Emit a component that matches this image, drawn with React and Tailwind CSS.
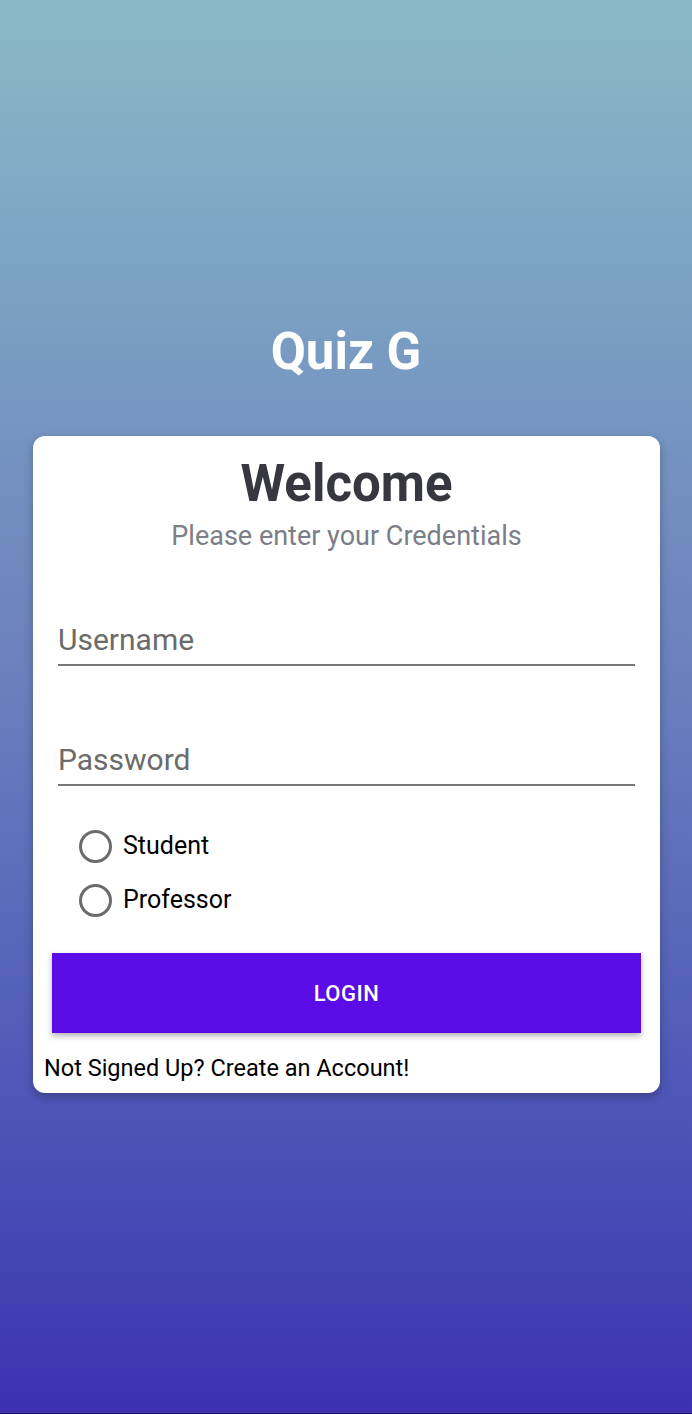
import React, { useState } from 'react';

const Radio = ({ label, checked, onClick }) => (
  <button onClick={onClick} className="flex items-center gap-[11px] h-[54px] text-left">
    <span className="w-[33px] h-[33px] rounded-full border-[3px] border-[#6b6b6b] flex items-center justify-center">
      {checked && <span className="w-[15px] h-[15px] rounded-full bg-[#5a0de6]" />}
    </span>
    <span className="text-[25px] text-black">{label}</span>
  </button>
);

const App = () => {
  const [role, setRole] = useState(null);

  return (
    <div
      className="w-[692px] h-[1414px] flex flex-col bg-gradient-to-b from-[#89b9c6] via-[#6a7dbd] to-[#3c31b0] border-b border-[#1a1660]"
      style={{ fontFamily: 'Roboto, "Liberation Sans", sans-serif' }}
    >
      {/* Title */}
      <h1 className="mt-[322px] text-center text-white font-bold text-[51px] leading-[60px]">
        Quiz G
      </h1>

      {/* Card */}
      <div className="mt-[54px] mx-[33px] w-[627px] bg-white rounded-[12px] shadow-[0_4px_10px_rgba(0,0,0,0.25)] px-[11px] pb-[10px] flex flex-col">
        <h2 className="mt-[20px] text-center font-bold text-[51px] leading-[56px] text-[#36373f]">
          Welcome
        </h2>
        <p className="mt-[8px] text-center text-[27px] leading-[32px] text-[#7b7e86]">
          Please enter your Credentials
        </p>

        {/* Inputs */}
        <div className="mx-[14px] mt-[68px] border-b-2 border-[#777777]">
          <input
            placeholder="Username"
            className="w-full text-[30px] leading-[40px] pb-[4px] outline-none placeholder:text-[#6b6b6b] bg-transparent"
          />
        </div>
        <div className="mx-[14px] mt-[74px] border-b-2 border-[#777777]">
          <input
            type="password"
            placeholder="Password"
            className="w-full text-[30px] leading-[40px] pb-[4px] outline-none placeholder:text-[#6b6b6b] bg-transparent"
          />
        </div>

        {/* Role */}
        <div className="mt-[33px] ml-[35px] flex flex-col">
          <Radio label="Student" checked={role === 'student'} onClick={() => setRole('student')} />
          <Radio label="Professor" checked={role === 'professor'} onClick={() => setRole('professor')} />
        </div>

        <button className="mt-[26px] mx-[8px] h-[80px] bg-[#5a0de6] text-white text-[22px] font-medium tracking-[0.5px] shadow-[0_3px_6px_rgba(0,0,0,0.3)]">
          LOGIN
        </button>

        <p className="mt-[20px] text-[23.5px] leading-[30px] text-black">
          Not Signed Up? Create an Account!
        </p>
      </div>
    </div>
  );
};

export default App;
